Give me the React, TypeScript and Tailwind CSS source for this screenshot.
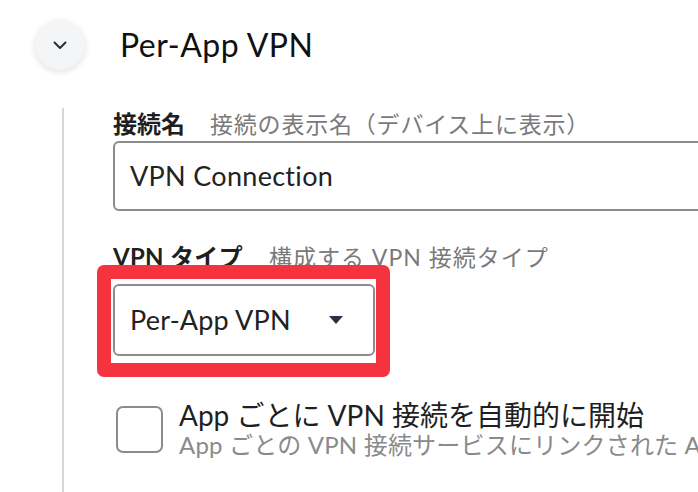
import React from "react";

export default function App() {
  return (
    <div
      className="relative w-[698px] h-[492px] overflow-hidden bg-white text-[#1f1f1f]"
      style={{ fontFamily: "Lato, 'Noto Sans CJK JP', sans-serif" }}
    >
      <div className="flex items-center pl-[35px] pt-[20px]">
        <div className="flex h-[50px] w-[50px] items-center justify-center rounded-full bg-[#f4f5f7] shadow-[0_2px_6px_rgba(0,0,0,0.12)]">
          <svg width="14" height="9" viewBox="0 0 14 9" fill="none">
            <path d="M1.5 1.5L7 7L12.5 1.5" stroke="#2a2f3a" strokeWidth="2" strokeLinecap="round" strokeLinejoin="round" />
          </svg>
        </div>
        <div className="ml-[35px] text-[32px] leading-[50px] tracking-[0.5px] text-[#111]">Per-App VPN</div>
      </div>

      <div className="ml-[62px] mt-[38px] h-[400px] border-l-2 border-[#d6d6d6] pl-[49px]">
        <div className="flex items-baseline leading-[32px]">
          <span className="text-[24px] font-bold text-[#1f1f1f]">接続名</span>
          <span className="ml-[25px] text-[23px] tracking-[0.8px] text-[#7a7a7a]">接続の表示名（デバイス上に表示）</span>
        </div>
        <div className="mt-[1px] flex h-[70px] w-[640px] items-center rounded-[6px] border-2 border-[#8c8c8c] pl-[15px] text-[27px] tracking-[0.3px] text-[#222]">
          VPN Connection
        </div>

        <div className="mt-[30px] flex items-baseline leading-[32px]">
          <span className="text-[24px] font-bold tracking-[0.3px] text-[#1f1f1f]">VPN タイプ</span>
          <span className="ml-[26px] text-[23px] tracking-[1px] text-[#7a7a7a]">構成する VPN 接続タイプ</span>
        </div>
        <div className="mt-[11px] flex h-[72px] w-[262px] items-center justify-between rounded-[6px] border-2 border-[#8c8c8c] pl-[15px] pr-[30px] text-[27px] tracking-[0.2px] text-[#222]">
          <span>Per-App VPN</span>
          <svg width="14" height="8" viewBox="0 0 14 8">
            <path d="M0 0H14L7 8Z" fill="#2b3040" />
          </svg>
        </div>

        <div className="mt-[44px] flex items-start">
          <div className="ml-[3px] mt-[6px] h-[47px] w-[47px] shrink-0 rounded-[7px] border-2 border-[#8c8c8c]" />
          <div className="ml-[16px] whitespace-nowrap">
            <div className="text-[28px] leading-[30px] text-[#1f1f1f]">App ごとに VPN 接続を自動的に開始</div>
            <div className="mt-[1px] text-[24px] leading-[28px] tracking-[0.2px] text-[#8a8a8a]">App ごとの VPN 接続サービスにリンクされた App</div>
          </div>
        </div>
      </div>

      <div className="pointer-events-none absolute left-[97px] top-[265px] h-[112px] w-[293px] rounded-[7px] border-[14px] border-[#f5333f]" />
    </div>
  );
}
